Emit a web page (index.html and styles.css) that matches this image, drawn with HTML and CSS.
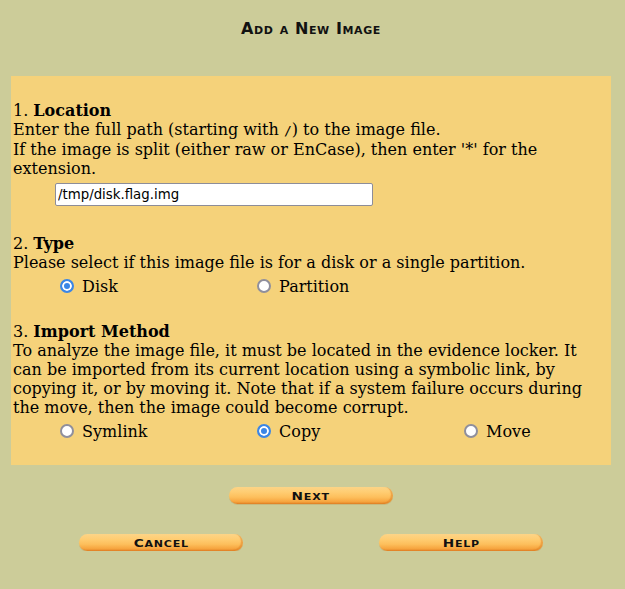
FILE: index.html
```html
<!DOCTYPE html>
<html lang="en">
<head>
<meta charset="utf-8">
<title>Add a New Image</title>
<link rel="stylesheet" href="styles.css">
</head>
<body>
<header class="header">
  <h1 class="title">Add a New Image</h1>
</header>
<form class="panel">
  <section class="section">
    <div class="heading">1. <b>Location</b></div>
    <p class="text">Enter the full path (starting with <tt class="mono">/</tt>) to the image file.<br>If the image is split (either raw or EnCase), then enter '*' for the extension.</p>
    <div class="input-row">
      <input class="path" type="text" value="/tmp/disk.flag.img">
    </div>
  </section>
  <section class="section section-type">
    <div class="heading">2. <b>Type</b></div>
    <p class="text">Please select if this image file is for a disk or a single partition.</p>
    <div class="choices">
      <label class="choice"><input class="radio" type="radio" name="type" checked> Disk</label>
      <label class="choice"><input class="radio" type="radio" name="type"> Partition</label>
    </div>
  </section>
  <section class="section section-import">
    <div class="heading">3. <b>Import Method</b></div>
    <p class="text">To analyze the image file, it must be located in the evidence locker. It can be imported from its current location using a symbolic link, by copying it, or by moving it. Note that if a system failure occurs during the move, then the image could become corrupt.</p>
    <div class="choices">
      <label class="choice"><input class="radio" type="radio" name="sort"> Symlink</label>
      <label class="choice"><input class="radio" type="radio" name="sort" checked> Copy</label>
      <label class="choice"><input class="radio" type="radio" name="sort"> Move</label>
    </div>
  </section>
</form>
<div class="next-row">
  <button class="pill" type="button"><span class="pill-label">Next</span></button>
</div>
<div class="bottom-row">
  <div class="cell"><button class="pill" type="button"><span class="pill-label">Cancel</span></button></div>
  <div class="cell"><button class="pill" type="button"><span class="pill-label">Help</span></button></div>
</div>
</body>
</html>
```
FILE: styles.css
```css
html, body {
  margin: 0;
  padding: 0;
}
body {
  background: #cccc99;
  color: #000;
  font-family: "DejaVu Serif", serif;
  font-size: 16px;
  line-height: 19px;
  width: 622px;
}
.header {
  padding-top: 21px;
  height: 76px;
  box-sizing: border-box;
  text-align: center;
}
.title {
  margin: 0;
  font-family: "DejaVu Sans", sans-serif;
  font-weight: bold;
  font-size: 16px;
  line-height: 16px;
  font-variant: small-caps;
  color: #111;
  letter-spacing: 0.6px;
}
.panel {
  width: 600px;
  margin: 0 auto;
  background: #f5d27a;
  padding: 25px 2px 25px 2px;
  box-sizing: border-box;
}
.section {
  display: flex;
  flex-direction: column;
}
.section-type { margin-top: 28px; }
.section-import { margin-top: 27px; }
.heading { height: 19px; }
.text { margin: 0; }
.mono {
  font-family: "DejaVu Sans Mono", monospace;
  font-size: 13px;
}
.input-row {
  margin-top: 5px;
  padding-left: 42px;
}
.path {
  box-sizing: border-box;
  width: 318px;
  height: 23px;
  margin: 0;
  padding: 1px 2px;
  border: 1px solid #8d8d99;
  border-radius: 2px;
  background: #fff;
  font-family: "DejaVu Sans", sans-serif;
  font-size: 13.33px;
  color: #000;
}
.choices {
  margin-top: 4px;
  display: grid;
  grid-template-columns: 197px 207px 1fr;
  padding-left: 42px;
  height: 19px;
}
.choice {
  white-space: nowrap;
}
.radio {
  appearance: none;
  -webkit-appearance: none;
  box-sizing: border-box;
  margin: 3px 3px 0 5px;
  width: 14px;
  height: 14px;
  border: 2px solid #8f8f9d;
  border-radius: 50%;
  background: #fff;
  vertical-align: -1px;
}
.radio:checked {
  border-color: #3b86e6;
  background: #3b86e6;
  box-shadow: inset 0 0 0 2px #fff;
}
.next-row {
  margin-top: 22px;
  display: flex;
  justify-content: center;
}
.bottom-row {
  margin: 30px auto 0;
  width: 600px;
  display: grid;
  grid-template-columns: 1fr 1fr;
}
.cell {
  display: flex;
  justify-content: center;
}
.pill {
  width: 164px;
  height: 17px;
  padding: 0;
  border: 0;
  border-radius: 9px;
  background: linear-gradient(to bottom, #fcd487 0%, #ffcd72 30%, #fdbf5c 60%, #f7a640 85%, #e8892a 100%);
  box-shadow: inset -2px -1px 1px rgba(214, 120, 30, 0.45), 0 1px 0 rgba(190, 150, 80, 0.35);
  font-family: "DejaVu Sans", sans-serif;
  font-weight: bold;
  line-height: 17px;
  color: #111;
}
.pill-label {
  display: inline-block;
  text-transform: uppercase;
  font-size: 8.5px;
  letter-spacing: 0.6px;
  transform: scaleX(1.3);
}
.pill-label::first-letter {
  font-size: 10.5px;
}
```
